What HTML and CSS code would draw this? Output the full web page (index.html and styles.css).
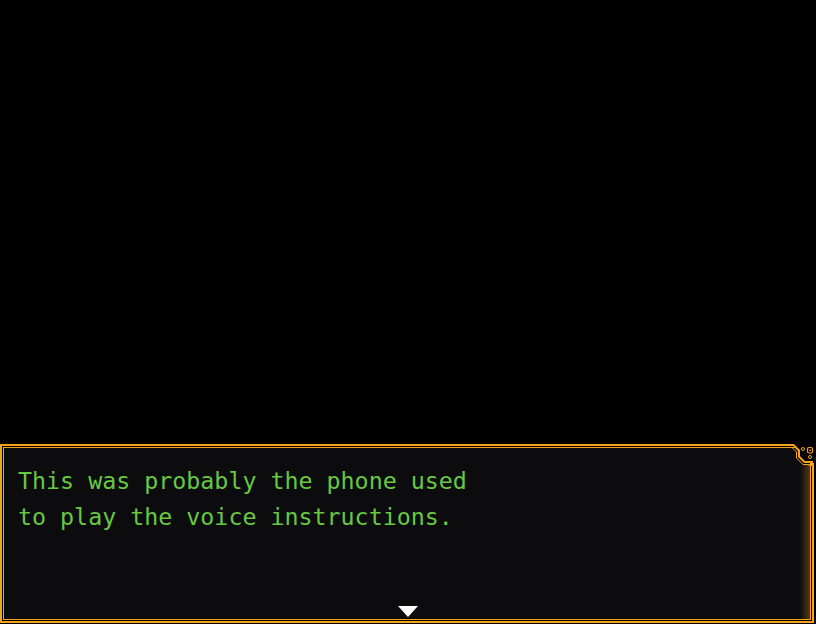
FILE: index.html
```html
<!DOCTYPE html>
<html>
<head>
<meta charset="utf-8">
<link rel="stylesheet" href="styles.css">
</head>
<body>
<div class="screen">
  <div class="stage"></div>
  <div class="window">
    <div class="inner">
      <p class="message">This was probably the phone used<br>to play the voice instructions.</p>
      <span class="edge"></span>
      <svg class="ornament" width="24" height="22" viewBox="0 0 24 22">
        <polygon points="3,0 24,0 24,19 15,19 9,13 9,6 4,1" fill="#000000"/>
        <path d="M0 1 H3.5 L9 6.5 V12.5 L14.5 18 H22 V22" fill="none" stroke="#f7a21b" stroke-width="2"/>
        <path d="M0 3.5 H2 L6.5 8 V14 L13 20.5 H19.5 V22" fill="none" stroke="#f7a21b" stroke-width="1"/>
        <circle cx="13" cy="5" r="1.5" fill="none" stroke="#f7a21b" stroke-width="1"/>
        <rect x="17.5" y="3.5" width="5" height="5.5" rx="1.5" fill="none" stroke="#f7a21b" stroke-width="1.2"/>
        <rect x="19.3" y="5.5" width="1.5" height="1.5" fill="#f7a21b"/>
        <circle cx="20" cy="13" r="1.5" fill="none" stroke="#f7a21b" stroke-width="1"/>
      </svg>
      <svg class="pause" width="20" height="11" viewBox="0 0 20 11">
        <polygon points="0,0 20,0 10,11" fill="#ffffff"/>
      </svg>
    </div>
  </div>
</div>
</body>
</html>
```
FILE: styles.css
```css
html, body {
  margin: 0;
  padding: 0;
  background: #000;
}
.screen {
  width: 816px;
  height: 624px;
  display: flex;
  flex-direction: column;
  background: #000;
}
.stage {
  height: 444px;
  flex: none;
}
.window {
  width: 814px;
  height: 179px;
  box-sizing: border-box;
  border: 2px solid #f7a21b;
  padding: 1px;
  background: #000;
}
.inner {
  position: relative;
  height: 100%;
  box-sizing: border-box;
  border: 1px solid #f7a21b;
  background: #0c0c0f;
  padding: 15px 14px 0 14px;
}
.message {
  margin: 0;
  font-family: "DejaVu Sans Mono", monospace;
  font-size: 23.3px;
  line-height: 36px;
  color: #68c840;
  white-space: nowrap;
}
.edge {
  position: absolute;
  top: 16px;
  right: 0;
  bottom: 0;
  width: 10px;
  background: linear-gradient(to right, rgba(247,162,27,0), rgba(247,162,27,0.3));
}
.ornament {
  position: absolute;
  top: -4px;
  right: -4px;
}
.pause {
  position: absolute;
  left: 394px;
  top: 158px;
}
```
